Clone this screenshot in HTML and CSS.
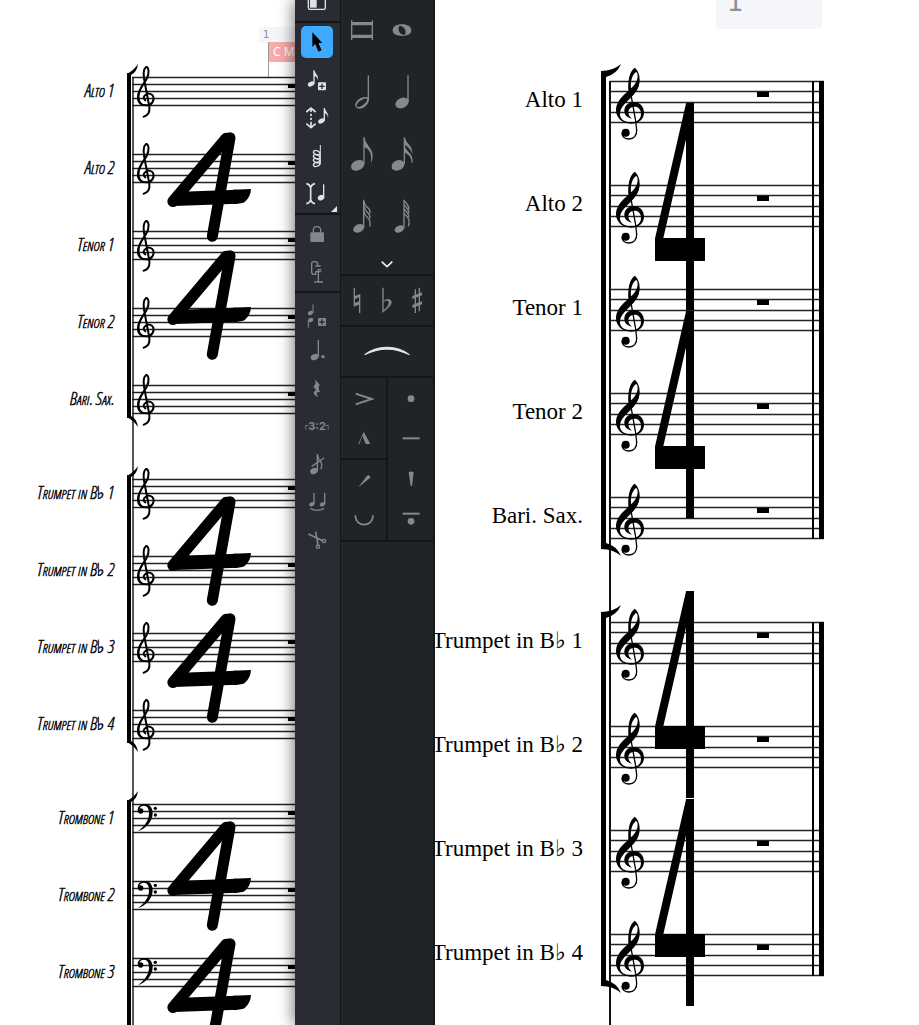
FILE: index.html
```html
<!DOCTYPE html>
<html lang="en">
<head>
<meta charset="utf-8">
<title>Score editor</title>
<link rel="stylesheet" href="styles.css">
</head>
<body>
<svg class="defs" aria-hidden="true">
  <defs>
    <symbol id="treble" viewBox="72 48 96 225">
      <path fill-rule="evenodd" d="M134 53C144 60 150 76 149 94C147 118 134 132 121 145C104 161 90 174 90 193C90 208 104 217 122 217C142 217 153 207 153 191C153 178 145 170 134 170C122 170 115 177 115 187C115 195 119 201 126 206C112 203 103 195 103 183C103 167 116 156 131 156C149 156 162 169 162 188C162 208 145 221 123 221C97 221 78 204 78 181C78 156 96 139 115 123C114 96 116 66 134 53ZM138 66C127 74 121 92 123 115C135 104 143 91 143 78C143 71 141 67 138 66Z"/>
      <path d="M120 118L137 213L140 240C141 257 131 267 117 267C104 267 96 259 96 249" fill="none" stroke="#000" stroke-width="4"/>
      <circle cx="107" cy="248" r="12"/>
    </symbol>
    <symbol id="treble-hand" viewBox="63 12 63 168">
      <path d="M86 170C98 167 105 156 103 140L90 72C85 50 84 28 93 21C102 20 103 40 96 54C89 70 70 86 69 112C68 128 80 137 96 136C112 135 118 120 115 110C112 102 100 98 94 103C85 108 83 116 91 121" fill="none" stroke="#000" stroke-width="6" stroke-linecap="round"/>
      <path d="M102 30C104 50 94 62 86 74C78 88 72 98 74 116C76 128 84 135 96 136C78 142 66 128 67 110C68 92 80 78 88 66C96 54 101 44 102 30Z"/>
    </symbol>
    <symbol id="bass-hand" viewBox="408 126 69 93">
      <path d="M413 152C412 139 423 132 434 132C451 132 458 145 458 160C457 186 438 205 414 214C434 199 447 182 447 160C447 146 442 137 432 137C424 137 419 141 418 148Z"/>
      <circle cx="422" cy="153" r="8"/><circle cx="466" cy="145" r="5"/><circle cx="466" cy="165" r="5"/>
    </symbol>
    <symbol id="meter-hand" viewBox="495 330 270 345">
      <g stroke="#000" stroke-linecap="round">
        <line x1="678" y1="356" x2="519" y2="544" stroke-width="34"/>
        <line x1="690" y1="354" x2="637" y2="649" stroke-width="33"/>
        <line x1="680" y1="350" x2="692" y2="350" stroke-width="24"/>
        <line x1="522" y1="537" x2="712" y2="530" stroke-width="42" stroke-linecap="butt"/>
      </g>
      <path d="M700 509L753 507Q752 530 735 545Q728 551 700 552Z"/>
    </symbol>
    <symbol id="tip-hand" viewBox="0 0 12 12"><path d="M0 11Q7 7 11 1Q10 9 4 12H0Z"/></symbol>
    <symbol id="tip" viewBox="0 0 20 13"><path d="M0 7Q12 7 20 0Q16 10 5 13H0Z"/></symbol>
    <symbol id="meter" viewBox="650 0 60 210">
      <rect x="686" y="0" width="8" height="207"/>
      <line x1="690" y1="1" x2="659" y2="136" stroke="#000" stroke-width="8"/>
      <rect x="655" y="135" width="50" height="23"/>
    </symbol>
    <g id="lines-hand">
      <g stroke="#222" stroke-width="1.3">
        <line x2="100%" y1=".5" y2=".5"/><line x2="100%" y1="7.5" y2="7.5"/><line x2="100%" y1="14.5" y2="14.5"/><line x2="100%" y1="21.5" y2="21.5"/><line x2="100%" y1="28.5" y2="28.5"/>
      </g>
      <rect x="156" y="7" width="12" height="4"/>
    </g>
    <g id="lines">
      <g stroke="#222" stroke-width="1.3">
        <line x2="100%" y1=".5" y2=".5"/><line x2="100%" y1="10.5" y2="10.5"/><line x2="100%" y1="21.5" y2="21.5"/><line x2="100%" y1="31.5" y2="31.5"/><line x2="100%" y1="41.5" y2="41.5"/>
      </g>
      <rect x="147" y="11" width="12" height="5"/>
    </g>
    <g id="staff-hand"><use href="#lines-hand"/><use href="#treble-hand" x="4" y="-13" width="21" height="56"/></g>
    <g id="staff-bass"><use href="#lines-hand"/><use href="#bass-hand" x="4" y="-2" width="23" height="31"/></g>
    <g id="staff"><use href="#lines"/><use href="#treble" x="4" y="-15" width="32" height="75"/></g>
  </defs>
</svg>

<div class="app">
  <main class="score score-hand">
    <div class="bar-tag">1</div>
    <div class="chord-tag">C Maj</div>
    <section class="group">
      <div class="row"><span class="name">Alto 1</span><svg class="staff"><use href="#staff-hand"/></svg></div>
      <div class="row"><span class="name">Alto 2</span><svg class="staff"><use href="#staff-hand"/></svg></div>
      <div class="row"><span class="name">Tenor 1</span><svg class="staff"><use href="#staff-hand"/></svg></div>
      <div class="row"><span class="name">Tenor 2</span><svg class="staff"><use href="#staff-hand"/></svg></div>
      <div class="row"><span class="name">Bari. Sax.</span><svg class="staff"><use href="#staff-hand"/></svg></div>
      <svg class="ink" role="img" aria-label="Bracket, four four time">
        <rect x="127" y="20" width="4" height="345"/>
        <use href="#tip-hand" x="127" y="10" width="12" height="12"/>
        <use href="#tip-hand" width="12" height="12" transform="translate(127 375) scale(1 -1)"/>
        <use href="#meter-hand" x="165" y="77" width="90" height="115"/>
        <use href="#meter-hand" x="165" y="195" width="90" height="115"/>
      </svg>
    </section>
    <section class="group">
      <div class="row"><span class="name">Trumpet in B♭ 1</span><svg class="staff"><use href="#staff-hand"/></svg></div>
      <div class="row"><span class="name">Trumpet in B♭ 2</span><svg class="staff"><use href="#staff-hand"/></svg></div>
      <div class="row"><span class="name">Trumpet in B♭ 3</span><svg class="staff"><use href="#staff-hand"/></svg></div>
      <div class="row"><span class="name">Trumpet in B♭ 4</span><svg class="staff"><use href="#staff-hand"/></svg></div>
      <svg class="ink" role="img" aria-label="Bracket, four four time">
        <rect x="127" y="20" width="4" height="268"/>
        <use href="#tip-hand" x="127" y="10" width="12" height="12"/>
        <use href="#tip-hand" width="12" height="12" transform="translate(127 298) scale(1 -1)"/>
        <use href="#meter-hand" x="165" y="39" width="90" height="115"/>
        <use href="#meter-hand" x="165" y="156" width="90" height="115"/>
      </svg>
    </section>
    <section class="group">
      <div class="row"><span class="name">Trombone 1</span><svg class="staff"><use href="#staff-bass"/></svg></div>
      <div class="row"><span class="name">Trombone 2</span><svg class="staff"><use href="#staff-bass"/></svg></div>
      <div class="row"><span class="name">Trombone 3</span><svg class="staff"><use href="#staff-bass"/></svg></div>
      <svg class="ink" role="img" aria-label="Bracket, four four time">
        <rect x="127" y="20" width="4" height="268"/>
        <use href="#tip-hand" x="127" y="10" width="12" height="12"/>
        <use href="#meter-hand" x="165" y="39" width="90" height="115"/>
        <use href="#meter-hand" x="165" y="156" width="90" height="115"/>
      </svg>
    </section>
  </main>

  <nav class="toolbar" aria-label="Note input">
    <div class="tools tools-top">
      <button aria-label="Panels"><svg viewBox="33 -42 96 96"><rect x="55" y="-32" width="51" height="51" rx="5" fill="none" stroke="#dfe2e6" stroke-width="4"/><path d="M60-10H80V14H60Z" fill="#dfe2e6"/></svg></button>
    </div>
    <div class="tools">
      <button class="on" aria-label="Select"><svg viewBox="33 78 96 96"><path fill="#000" d="M67 97V141L76 132L85 155L95 151L85 129H97Z"/></svg></button>
      <button aria-label="Insert note"><svg viewBox="33 192 96 96"><ellipse cx="63" cy="252" rx="10" ry="7" transform="rotate(-25 63 252)"/><path d="M70 211H74C75 223 88 227 83 241C83 232 78 229 74 228V251H70Z"/><rect x="84" y="247" width="24" height="24" rx="3"/><path d="M96 251V267M88 259H104" class="cut"/></svg></button>
      <button aria-label="Pitch before rhythm"><svg viewBox="33 306 96 96"><path class="line" d="M49 336L63 324L77 336M49 371L63 383L77 371M63 326V336M63 341V348M63 353V360M63 365V381" stroke-width="5"/><ellipse cx="94" cy="363" rx="10" ry="7" transform="rotate(-25 94 363)"/><path d="M101 324H105C106 336 118 340 114 353C113 344 109 341 105 340V362H101Z"/></svg></button>
      <button aria-label="Chord input"><svg viewBox="33 420 96 96"><path class="line" d="M91 435V492" stroke-width="3"/><g class="line" stroke-width="4"><ellipse cx="80" cy="493" rx="10" ry="6" transform="rotate(-20 80 493)"/><ellipse cx="80" cy="482" rx="10" ry="6" transform="rotate(20 80 482)"/><ellipse cx="80" cy="470" rx="10" ry="6" transform="rotate(20 80 470)"/><ellipse cx="80" cy="458" rx="10" ry="6" transform="rotate(20 80 458)"/></g></svg></button>
      <button class="more" aria-label="Insert mode"><svg viewBox="33 534 96 96"><path class="line" d="M49 551Q58 552 62 562Q66 552 75 551M49 611Q58 610 62 600Q66 610 75 611M62 560V602" stroke-width="5"/><ellipse cx="93" cy="593" rx="10" ry="8" transform="rotate(-25 93 593)"/><rect x="99" y="553" width="4" height="40"/></svg></button>
    </div>
    <div class="tools dim">
      <button aria-label="Lock duration"><svg viewBox="33 654 96 96"><rect x="61" y="697" width="41" height="29" rx="2"/><path class="line" d="M70 698V691Q70 680 81 680Q92 680 92 691V698"/></svg></button>
      <button aria-label="Force duration"><svg viewBox="33 -12 96 96"><path class="line" d="M83 18V13Q83 5 75 5H71Q65 5 65 11V35Q65 43 71 43H77V35M76 18H92M76 35H94M85 29V66M83 29H94M73 66H99"/></svg></button>
    </div>
    <div class="tools dim">
      <button aria-label="Add staff note"><svg viewBox="33 96 96 96"><ellipse cx="61" cy="147" rx="8" ry="6" transform="rotate(-20 61 147)"/><path class="line" d="M69 121V147M55 168V191" stroke-width="3"/><ellipse cx="62" cy="168" rx="8" ry="6" transform="rotate(-20 62 168)"/><rect x="84" y="162" width="24" height="24" rx="3"/><path d="M96 166V182M88 174H104" class="cut"/></svg></button>
      <button aria-label="Dotted"><svg viewBox="33 222 96 96"><ellipse cx="74" cy="291" rx="12" ry="9" transform="rotate(-25 74 291)"/><rect x="83" y="240" width="4" height="50"/><circle cx="99" cy="290" r="5"/></svg></button>
      <button aria-label="Rest"><svg viewBox="33 336 96 96"><path d="M75 358L89 374Q82 384 91 397Q79 393 80 402Q81 407 86 411Q70 407 71 397Q73 391 80 392L70 380Q80 373 75 358Z"/></svg></button>
      <button class="tuplet" aria-label="Tuplet 3:2"><span class="hook">┌</span>3:2<span class="hook">┐</span></button>
      <button aria-label="Grace note"><svg viewBox="33 564 96 96"><ellipse cx="72" cy="633" rx="12" ry="9" transform="rotate(-25 72 633)"/><path class="line" d="M82 582V632M83 585Q84 598 92 605Q98 613 93 628M65 619L102 594" stroke-width="4"/></svg></button>
      <button aria-label="Tie"><svg viewBox="33 678 96 96"><ellipse cx="65" cy="733" rx="8" ry="6" transform="rotate(-20 65 733)"/><ellipse cx="97" cy="733" rx="8" ry="6" transform="rotate(-20 97 733)"/><path class="line" d="M72 699V733M104 699V733M61 745Q81 757 102 745"/></svg></button>
      <button aria-label="Scissors"><svg viewBox="33 792 96 96"><path class="line" d="M55 822L98 842M77 815L84 854" stroke-width="5"/><circle class="line" cx="102" cy="843" r="5"/><circle class="line" cx="84" cy="860" r="5"/></svg></button>
    </div>
  </nav>

  <aside class="panel" aria-label="Notes">
    <div class="box durations">
      <button aria-label="Breve"><svg viewBox="156 33 120 120"><path d="M183 61H187V120H183ZM245 61H249V120H245ZM187 66H245V76H187ZM187 104H245V114H187Z"/></svg></button>
      <button aria-label="Whole"><svg viewBox="276 33 120 120"><path fill-rule="evenodd" d="M336 73C353 73 364 80 364 91S353 108 336 108S308 102 308 91S319 73 336 73ZM330 77C322 79 324 103 342 105C351 103 348 80 330 77Z"/></svg></button>
      <button aria-label="Half"><svg viewBox="156 219 120 120"><path fill-rule="evenodd" d="M196 318C192 305 213 288 231 291C246 297 230 325 209 326C203 326 198 324 196 318ZM200 319C204 328 236 306 231 297C226 290 196 309 200 319Z"/><rect x="233" y="226" width="4" height="77"/></svg></button>
      <button aria-label="Quarter"><svg viewBox="276 219 120 120"><ellipse cx="336" cy="309" rx="21" ry="15" transform="rotate(-25 336 309)"/><rect x="352" y="226" width="4" height="80"/></svg></button>
      <button aria-label="Eighth"><svg viewBox="156 405 120 120"><ellipse cx="203" cy="496" rx="21" ry="15" transform="rotate(-25 203 496)"/><path d="M220 412H224C225 434 249 445 248 468C248 476 246 484 242 489C247 464 239 448 224 442V492H220Z"/></svg></button>
      <button aria-label="Sixteenth"><svg viewBox="276 405 120 120"><ellipse cx="324" cy="496" rx="20" ry="15" transform="rotate(-25 324 496)"/><path d="M341 412H345C346 430 370 436 367 464C366 452 354 440 345 436V440C350 456 373 462 367 489H364C367 470 352 462 345 458V492H341Z"/></svg></button>
      <button aria-label="Thirty-second"><svg viewBox="156 591 120 120"><ellipse cx="206" cy="685" rx="17" ry="12" transform="rotate(-25 206 685)"/><path class="line" d="M221 599V684M222 604Q224 617 232 622Q241 628 240 640M222 619Q225 632 232 637Q241 644 240 655M222 634Q225 647 232 652Q242 660 240 680"/></svg></button>
      <button aria-label="Sixty-fourth"><svg viewBox="276 591 120 120"><ellipse cx="328" cy="687" rx="15" ry="10" transform="rotate(-25 328 687)"/><path class="line" d="M342 599V684M343 603Q356 615 357 628M343 616Q356 627 357 640M343 628Q356 640 357 653M343 641Q354 650 357 660Q358 672 355 679"/></svg></button>
      <button class="expand" aria-label="Show more"><svg viewBox="264 746 54 72"><path class="line" d="M275 784L291 799L307 784" stroke-width="5"/></svg></button>
    </div>
    <div class="box accidentals">
      <button aria-label="Natural"><svg viewBox="156 62 90 120"><path fill-rule="evenodd" d="M191 82H195V107L211 101V158H207V133L191 139ZM195 116V128L207 123V111Z"/></svg></button>
      <button aria-label="Flat"><svg viewBox="246 62 90 120"><path fill-rule="evenodd" d="M277 82H281V122C290 112 305 115 305 126C304 138 288 148 277 158ZM281 126V149C290 142 296 135 296 127C296 118 287 119 281 126Z"/></svg></button>
      <button aria-label="Sharp"><svg viewBox="336 62 90 120"><path d="M374 87H378V158H374ZM386 82H390V153H386ZM367 107L396 96V105L367 116ZM367 134L396 123V132L367 143Z"/></svg></button>
    </div>
    <div class="box slur">
      <button aria-label="Slur"><svg viewBox="216 245 150 60"><path d="M223 282Q250 259 291 259T359 282L358 285Q326 268 291 268T224 285Z"/></svg></button>
    </div>
    <div class="articulations">
      <div class="box"><button aria-label="Accent"><svg viewBox="160 354 120 120"><path class="line" d="M195 401L243 417L195 433" stroke-width="6"/></svg></button>
      <button aria-label="Marcato"><svg viewBox="160 474 120 120"><path d="M203 552L219 515L239 552H225L215 527L206 552Z"/></svg></button></div>
      <div class="box tall"><button aria-label="Staccato"><svg viewBox="301 355 120 120"><circle cx="361" cy="417" r="10"/></svg></button>
      <button aria-label="Tenuto"><svg viewBox="301 476 120 120"><rect x="336" y="531" width="51" height="6"/></svg></button>
      <button aria-label="Staccatissimo"><svg viewBox="301 598 120 120"><path d="M354 637Q361 634 369 637L364 679H360Z"/></svg></button>
      <button aria-label="Tenuto staccato"><svg viewBox="301 719 120 120"><rect x="336" y="757" width="51" height="6"/><circle cx="361" cy="783" r="10"/></svg></button></div>
      <div class="box"><button aria-label="Stress"><svg viewBox="160 600 120 120"><path d="M203 682L228 649Q236 641 239 653Z"/></svg></button>
      <button aria-label="Unstress"><svg viewBox="160 720 120 120"><path class="line" d="M194 766C194 803 247 803 247 766" stroke-width="5"/></svg></button></div>
    </div>
    <div class="box rest"></div>
  </aside>

  <main class="score score-plain">
    <div class="bar-tag">1</div>
    <section class="group">
      <div class="row"><span class="name">Alto 1</span><svg class="staff"><use href="#staff"/></svg></div>
      <div class="row"><span class="name">Alto 2</span><svg class="staff"><use href="#staff"/></svg></div>
      <div class="row"><span class="name">Tenor 1</span><svg class="staff"><use href="#staff"/></svg></div>
      <div class="row"><span class="name">Tenor 2</span><svg class="staff"><use href="#staff"/></svg></div>
      <div class="row"><span class="name">Bari. Sax.</span><svg class="staff"><use href="#staff"/></svg></div>
      <div class="final"></div>
      <svg class="ink" role="img" aria-label="Bracket, four four time">
        <rect x="166" y="26" width="5" height="468"/>
        <use href="#tip" x="166" y="14" width="20" height="13"/>
        <use href="#tip" width="20" height="13" transform="translate(166 506) scale(1 -1)"/>
        <use href="#meter" x="215" y="53" width="60" height="210"/>
        <use href="#meter" x="215" y="261" width="60" height="210"/>
      </svg>
    </section>
    <section class="group">
      <div class="row"><span class="name">Trumpet in B♭ 1</span><svg class="staff"><use href="#staff"/></svg></div>
      <div class="row"><span class="name">Trumpet in B♭ 2</span><svg class="staff"><use href="#staff"/></svg></div>
      <div class="row"><span class="name">Trumpet in B♭ 3</span><svg class="staff"><use href="#staff"/></svg></div>
      <div class="row"><span class="name">Trumpet in B♭ 4</span><svg class="staff"><use href="#staff"/></svg></div>
      <div class="final"></div>
      <svg class="ink" role="img" aria-label="Bracket, four four time">
        <rect x="166" y="26" width="5" height="364"/>
        <use href="#tip" x="166" y="14" width="20" height="13"/>
        <use href="#tip" width="20" height="13" transform="translate(166 402) scale(1 -1)"/>
        <use href="#meter" x="215" y="0" width="60" height="210"/>
        <use href="#meter" x="215" y="208" width="60" height="210"/>
      </svg>
    </section>
  </main>
</div>
</body>
</html>
```

FILE: styles.css
```css
* { box-sizing: border-box; }
body { margin: 0; background: #fff; color: #000; }
.defs { position: absolute; width: 0; height: 0; }
.app { display: grid; grid-template-columns: minmax(0, 295fr) 45px 95px minmax(0, 484fr); height: 100vh; overflow: hidden; }

/* Scores */
.score { position: relative; min-width: 0; overflow: hidden; display: flex; flex-direction: column; background: #fff; }
.group { position: relative; flex: none; }
.row { display: flex; align-items: center; }
.name { flex: none; display: flex; justify-content: flex-end; padding-bottom: 4px; white-space: pre; }
.staff { flex: 1; min-width: 0; overflow: visible; }
.ink { position: absolute; inset: 0; width: 100%; height: 100%; overflow: visible; pointer-events: none; }
.score::before { content: ""; position: absolute; bottom: 0; }

.score-hand { padding-top: 53px; gap: 17px; }
.score-hand::before { top: 77px; left: 132px; width: 2px; background: #555; }
.score-hand .row { height: 77px; gap: 18px; }
.score-hand .staff { height: 29px; }
.score-hand .name { width: 114px; font: italic 300 18px/20px "Open Sans Condensed Light", "Open Sans Condensed", "DejaVu Sans Condensed", sans-serif; font-variant: small-caps; -webkit-text-stroke: 0.4px #000; }
.score-hand .bar-tag { position: absolute; top: 27px; left: 259px; right: 0; height: 16px; padding-left: 4px; background: #f4f6f9; color: #8a9196; font: 10px/16px "DejaVu Sans", sans-serif; }
.chord-tag { position: absolute; top: 42px; left: 268px; right: 0; height: 35px; border-left: 1px solid #999; color: #fff; font: 12px/20px "Noto Sans", sans-serif; padding-left: 4px; white-space: nowrap; background: linear-gradient(#f8abab, #f8abab) 0 0 / 100% 20px no-repeat; overflow: hidden; }

.score-plain { padding: 50px 95px 0 0; gap: 21px; }
.score-plain::before { top: 81px; left: 174px; width: 2px; background: #111; }
.score-plain .row { height: 104px; gap: 27px; }
.score-plain .staff { height: 42px; }
.score-plain .name { width: 148px; font: 23px/28px "Liberation Serif", "DejaVu Serif", serif; }
.score-plain .bar-tag { position: absolute; top: 0; right: 97px; width: 106px; height: 29px; border-radius: 0 0 3px 3px; padding-left: 11px; background: #f4f6f9; color: #8a9196; font: 26px/5px "DejaVu Sans", sans-serif; }
.final { position: absolute; top: 31px; bottom: 31px; right: 0; width: 12px; border-left: 2px solid #000; border-right: 5px solid #000; }

/* Tool strips */
button { display: flex; align-items: center; justify-content: center; margin: 0; padding: 0; border: 0; background: none; color: inherit; }
button svg { display: block; fill: currentColor; stroke-width: 4; }
.line { fill: none; stroke: currentColor; }
.cut { fill: none; stroke: #292d33; }

.toolbar { position: relative; display: flex; flex-direction: column; gap: 2px; background: #14171a; color: #dfe2e6; box-shadow: -2px 0 14px rgba(0, 0, 0, .5); }
.tools { display: flex; flex-direction: column; align-items: flex-start; background: #292d33; }
.tools button { width: 44px; height: 38px; }
.tools svg { width: 32px; height: 32px; }
.tools-top { height: 21px; justify-content: flex-end; }
.tools:last-child { flex: 1; }
.dim { color: #83878c; }
.on svg { background: #3ea9ff; border-radius: 5px; }
.more { position: relative; }
.more::after { content: ""; position: absolute; right: 2px; bottom: 1px; border: 3px solid; border-color: transparent #dfe2e6 #dfe2e6 transparent; }
.tools .tuplet { font: bold 11px/16px Inter, sans-serif; }
.hook { font: 8px/16px "DejaVu Sans Mono", monospace; }

.panel { position: relative; display: flex; flex-direction: column; gap: 2px; padding: 0 2px 0 1px; background: #14171a; color: #85898c; }
.box { background: #1f2427; }
.durations { display: grid; grid-template-columns: 40px 40px; grid-template-rows: repeat(4, 62px) 26px; padding-left: 1px; }
.durations svg, .articulations svg { width: 40px; height: 40px; }
.durations .expand { grid-column: 1 / 3; padding-left: 10px; color: #eee; }
.durations .expand svg { width: 18px; height: 24px; }
.accidentals { display: flex; justify-content: center; height: 49px; align-items: center; }
.accidentals svg { width: 30px; height: 40px; }
.slur { display: flex; justify-content: center; height: 49px; color: #dfe6ea; }
.slur svg { width: 50px; height: 20px; }
.articulations { display: grid; grid-template-columns: 1fr 1fr; grid-template-rows: 80px 80px; gap: 2px; }
.articulations .box { display: flex; flex-direction: column; }
.articulations button { flex: 1; }
.articulations .tall { grid-column: 2; grid-row: 1 / 3; }
.rest { flex: 1; }
```
